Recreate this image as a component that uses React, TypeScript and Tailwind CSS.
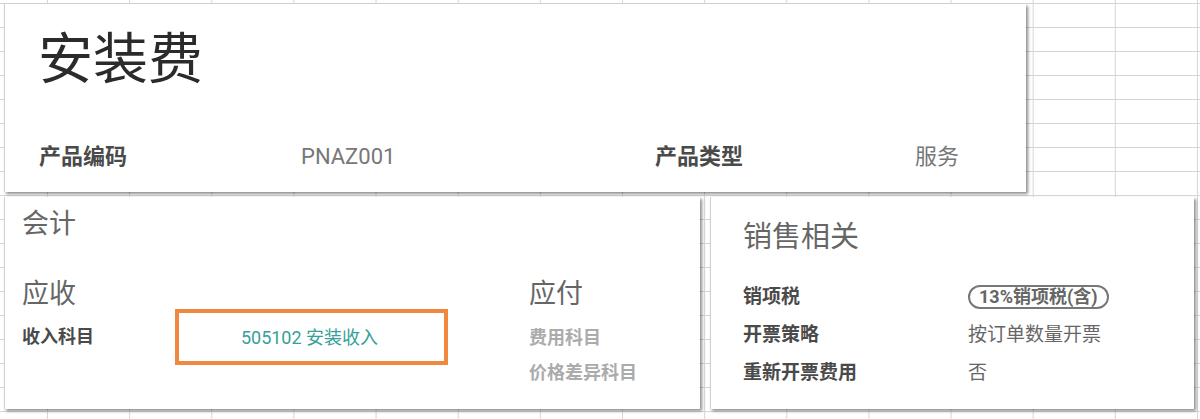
export default function App() {
  const font = "font-['Roboto','Noto_Sans_CJK_SC',sans-serif]";
  return (
    <div
      className={`${font} relative h-[419px] w-[1200px] overflow-hidden bg-white bg-[linear-gradient(to_right,#d6d6d6_1px,transparent_1px),linear-gradient(to_bottom,#d6d6d6_1px,transparent_1px)] bg-[size:82.15px_24px] bg-[position:47px_3px]`}
    >
      <div className="flex flex-col gap-[5px] pl-[4px] pt-[4px]">
        {/* Top card */}
        <div className="flex h-[188px] w-[1022px] flex-col bg-white pl-[34px] pt-[24px] shadow-[2px_2px_3px_rgba(0,0,0,0.45)] border-l border-[#cfcfcf]">
          <div className="ml-[-1px] text-[55px] leading-[62px] text-[#2b2b2b]">安装费</div>
          <div className="mt-[53px] grid grid-cols-[262px_354px_260px_1fr] items-center text-[22px] leading-[28px]">
            <div className="font-bold text-[#4a4a4a]">产品编码</div>
            <div className="text-[#777]">PNAZ001</div>
            <div className="font-bold text-[#4a4a4a]">产品类型</div>
            <div className="text-[#777]">服务</div>
          </div>
        </div>

        {/* Bottom row */}
        <div className="flex gap-[10px]">
          <div className="flex h-[212px] w-[696px] flex-col bg-white pl-[17px] pt-[10px] shadow-[2px_2px_3px_rgba(0,0,0,0.45)] border-l border-[#cfcfcf]">
            <div className="text-[27px] leading-[34px] text-[#666]">会计</div>
            <div className="mt-[36px] flex">
              <div className="flex w-[507px] flex-col">
                <div className="text-[27px] leading-[34px] text-[#666]">应收</div>
                <div className="flex items-start">
                  <div className="w-[153px] pt-[14px] text-[18px] font-bold leading-[24px] text-[#4a4a4a]">收入科目</div>
                  <div className="mt-[-2px] flex h-[56px] w-[273px] items-center justify-center border-[4px] border-[#f0883e] pr-[4px] text-[18px] text-[#36a09a]">
                    505102 安装收入
                  </div>
                </div>
              </div>
              <div className="flex flex-col">
                <div className="text-[27px] leading-[34px] text-[#666]">应付</div>
                <div className="pt-[15px] text-[18px] font-bold leading-[24px] text-[#ababab]">费用科目</div>
                <div className="pt-[11px] text-[18px] font-bold leading-[24px] text-[#ababab]">价格差异科目</div>
              </div>
            </div>
          </div>

          <div className="flex h-[212px] w-[484px] flex-col bg-white pl-[32px] pt-[22px] shadow-[2px_2px_3px_rgba(0,0,0,0.45)] border-l border-[#cfcfcf]">
            <div className="text-[29px] leading-[36px] text-[#666]">销售相关</div>
            <div className="mt-[30px] grid grid-cols-[225px_1fr] gap-y-[14px] text-[19px] leading-[24px]">
              <div className="font-bold text-[#4a4a4a]">销项税</div>
              <div>
                <span className="inline-block rounded-full border-2 border-[#777] px-[9px] text-[18px] font-bold leading-[20px] text-[#666]">
                  13%销项税(含)
                </span>
              </div>
              <div className="font-bold text-[#4a4a4a]">开票策略</div>
              <div className="text-[#666]">按订单数量开票</div>
              <div className="font-bold text-[#4a4a4a]">重新开票费用</div>
              <div className="text-[#666]">否</div>
            </div>
          </div>
        </div>
      </div>
    </div>
  );
}
